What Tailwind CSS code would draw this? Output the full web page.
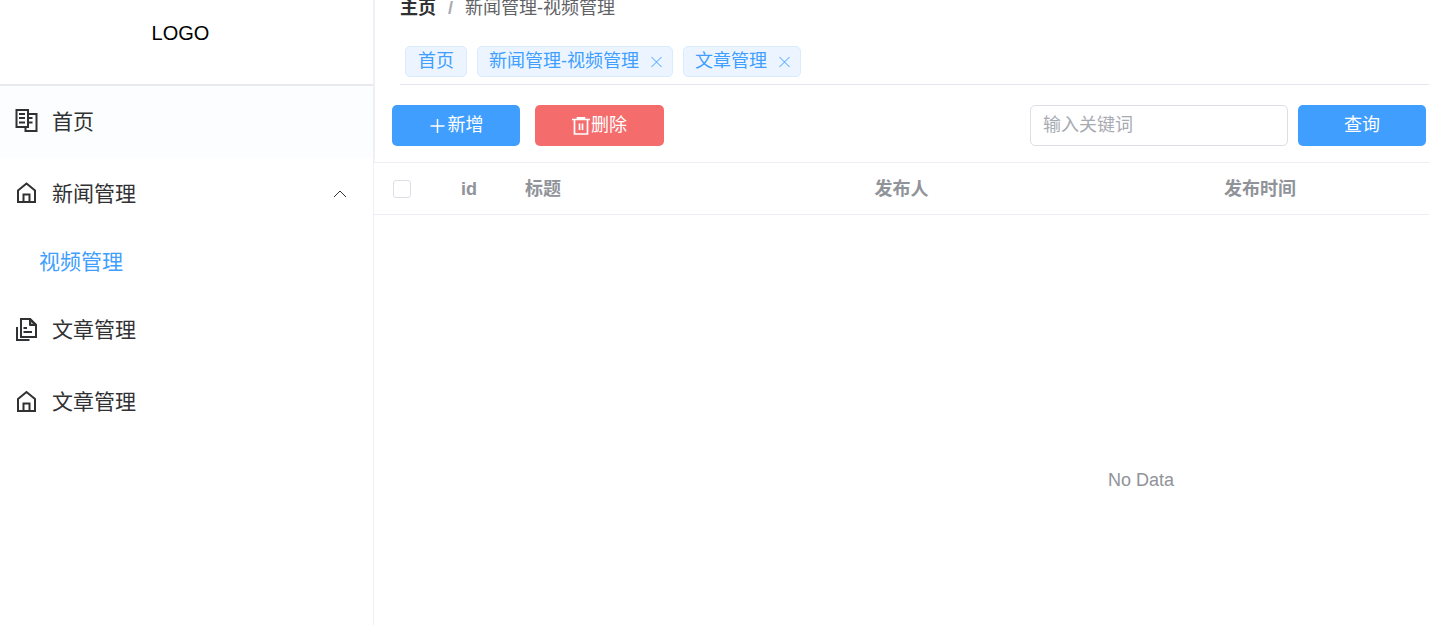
<!DOCTYPE html>
<html lang="zh-CN">
<head>
    <meta charset="UTF-8">
    <meta name="viewport" content="width=device-width, initial-scale=1.0">
    <title>新闻管理-视频管理</title>
    <script src="https://cdn.jsdelivr.net/npm/@tailwindcss/browser@4"></script>
</head>
<body class="flex h-screen overflow-hidden bg-white font-['Liberation_Sans','Noto_Sans_CJK_SC',sans-serif] text-[18px] text-[#303133]">
    <!-- Sidebar -->
    <aside class="w-[375px] shrink-0 border-r-2 border-[#efeff5]">
        <div class="h-[86px] border-b-2 border-[#e9e9f0] pr-3 pt-4 text-center text-[20px] leading-[34px] text-black">LOGO</div>
        <nav class="text-[21px]">
            <a href="#" class="flex h-[72px] items-center gap-[14px] bg-[#fcfdff] px-[14px]">
                <svg class="size-6 overflow-visible" viewBox="0 0 24 24" fill="none" stroke="currentColor" stroke-width="2">
                    <path d="M14 14V0H2.500v17H12"/>
                    <path d="M14 4h8.500v17H11.500v-4H14V13"/>
                    <path d="M5 4h6M5 8h6M5 12.500h6M15 8h3.500M15 12.500h3.500"/>
                </svg>
                首页
            </a>
            <a href="#" class="flex h-[72px] items-center gap-[14px] px-[14px]">
                <svg class="size-6" viewBox="0 0 24 24" fill="none" stroke="currentColor" stroke-width="2">
                    <path d="M4 8.500L12.500 1.500 21 8.500V20H4z"/>
                    <path d="M9.500 20v-7.500h6V20"/>
                </svg>
                <span class="grow">新闻管理</span>
                <svg class="mr-3 size-4" viewBox="0 0 16 16" fill="none" stroke="currentColor">
                    <path d="M3 11l6-6 6 6"/>
                </svg>
            </a>
            <a href="#" class="flex h-16 items-center pl-[39px] text-[#409eff]">视频管理</a>
            <a href="#" class="flex h-[72px] items-center gap-[14px] px-[14px]">
                <svg class="size-6 overflow-visible" viewBox="0 0 24 24" fill="none" stroke="currentColor" stroke-width="2">
                    <path d="M7 1h9l6 6v12H7z"/>
                    <path d="M16 1v6h6z" fill="currentColor" fill-opacity=".4" stroke-linejoin="round"/>
                    <path d="M3 9v13h12.500"/>
                    <path d="M9.500 10H13M9.500 14H18"/>
                </svg>
                文章管理
            </a>
            <a href="#" class="flex h-[72px] items-center gap-[14px] px-[14px]">
                <svg class="size-6" viewBox="0 0 24 24" fill="none" stroke="currentColor" stroke-width="2">
                    <path d="M4 9L12.500 2 21 9V21H4z"/>
                    <path d="M9.500 21v-7.500h6V21"/>
                </svg>
                文章管理
            </a>
        </nav>
    </aside>

    <!-- Main -->
    <main class="-ml-px min-w-0 grow overflow-hidden">
        <header class="ml-[26px] h-[85px] border-b border-[#e6e6ee]">
            <nav class="flex h-4 items-center leading-4">
                <a href="#" class="font-bold">主页</a>
                <span class="mx-3 font-bold text-[#a8abb2]">/</span>
                <span class="text-[#606266]">新闻管理-视频管理</span>
            </nav>
            <div class="mt-[30px] flex gap-[10px] pl-[5px] text-[#409eff]">
                <a href="#" class="flex h-[31px] items-center rounded-[5px] border border-[#d9ecff] bg-[#ecf5ff] px-3">首页</a>
                <span class="flex h-[31px] items-center gap-[9px] rounded-[5px] border border-[#d9ecff] bg-[#ecf5ff] pl-[11px] pr-2">
                    <a href="#">新闻管理-视频管理</a>
                    <button type="button" aria-label="关闭">
                        <svg class="size-4" viewBox="0 0 16 16" stroke="currentColor"><path d="M3.500 3l10 10M13.500 3l-10 10"/></svg>
                    </button>
                </span>
                <span class="flex h-[31px] items-center gap-[9px] rounded-[5px] border border-[#d9ecff] bg-[#ecf5ff] pl-[11px] pr-2">
                    <a href="#">文章管理</a>
                    <button type="button" aria-label="关闭">
                        <svg class="size-4" viewBox="0 0 16 16" stroke="currentColor"><path d="M3.500 3l10 10M13.500 3l-10 10"/></svg>
                    </button>
                </span>
            </div>
        </header>

        <!-- Toolbar -->
        <div class="flex pb-4 pl-[18px] pr-[3px] pt-5">
            <button type="button" class="flex h-[41px] w-32 items-center justify-center gap-px rounded-[5px] bg-[#409eff] text-white">
                <svg class="size-[18px]" viewBox="0 0 18 18" fill="none" stroke="currentColor" stroke-width="1.500"><path d="M8.500 2v14M1.500 9h14"/></svg>
                新增
            </button>
            <button type="button" class="ml-[15px] flex h-[41px] w-[129px] items-center justify-center gap-px rounded-[5px] bg-[#f56c6c] text-white">
                <svg class="size-[18px]" viewBox="0 0 18 18" fill="none" stroke="currentColor" stroke-width="1.700"><path d="M0 2.500h18M5.500 2V.900h7V2M2.500 3v14h13V3M7.500 6.500v6.500M10.500 6.500v6.500"/></svg>
                删除
            </button>
            <input type="text" aria-label="关键词" placeholder="输入关键词" class="ml-auto h-[41px] w-[258px] rounded-[5px] border border-[#dcdfe6] px-3 placeholder:text-[#a8abb2]">
            <button type="button" class="ml-[10px] h-[41px] w-32 rounded-[5px] bg-[#409eff] text-white">查询</button>
        </div>

        <!-- Table, wider than the visible area -->
        <table class="w-[1534px] table-fixed border-t border-[#ebeef5] bg-white text-left text-[#909399]">
            <thead>
                <tr class="h-[52px] border-b border-[#ebeef5]">
                    <th class="w-[72px] pl-[19px]">
                        <input type="checkbox" aria-label="全选" class="block size-[18px] appearance-none rounded-[3px] border border-[#dcdfe6] bg-white">
                    </th>
                    <th class="w-16 pl-[15px] pt-0.5">id</th>
                    <th class="pl-[15px] pt-0.5">标题</th>
                    <th class="pl-[15px] pt-0.5">发布人</th>
                    <th class="pl-[15px] pt-0.5">发布时间</th>
                    <th class="pl-[15px] pt-0.5">操作</th>
                </tr>
            </thead>
            <tbody>
                <tr>
                    <td colspan="6" class="h-[532px] text-center">No Data</td>
                </tr>
            </tbody>
        </table>
    </main>
</body>
</html>
